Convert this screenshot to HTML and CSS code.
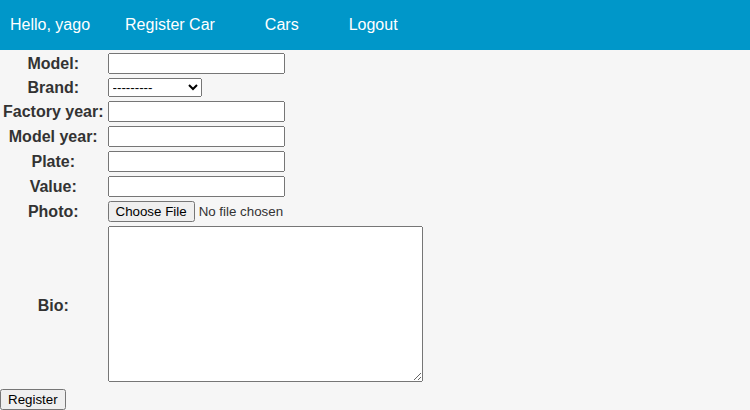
FILE: index.html
```html
<!DOCTYPE html>
<html>
<head>
<meta charset="utf-8">
<link rel="stylesheet" href="styles.css">
</head>
<body>
<nav class="topbar">
  <span class="greet">Hello, yago</span>
  <a class="nav-link" href="#">Register Car</a>
  <a class="nav-link" href="#">Cars</a>
  <a class="nav-link" href="#">Logout</a>
</nav>
<form class="car-form">
  <table class="form-table">
    <tr><th class="lbl">Model:</th><td><input class="txt" type="text"></td></tr>
    <tr><th class="lbl">Brand:</th><td><select class="sel"><option>---------</option></select></td></tr>
    <tr><th class="lbl">Factory year:</th><td><input class="txt" type="text"></td></tr>
    <tr><th class="lbl">Model year:</th><td><input class="txt" type="text"></td></tr>
    <tr><th class="lbl">Plate:</th><td><input class="txt" type="text"></td></tr>
    <tr><th class="lbl">Value:</th><td><input class="txt" type="text"></td></tr>
    <tr><th class="lbl">Photo:</th><td><input class="file" type="file"></td></tr>
    <tr><th class="lbl">Bio:</th><td><textarea class="bio"></textarea></td></tr>
  </table>
  <input class="submit" type="submit" value="Register">
</form>
</body>
</html>
```
FILE: styles.css
```css
html, body {
  margin: 0;
  padding: 0;
}
body {
  background: #f6f6f6;
  font-family: "Liberation Sans", Arial, sans-serif;
  color: #333;
}
.topbar {
  height: 50px;
  background: #0097c9;
  display: flex;
  align-items: center;
  font-size: 16px;
}
.greet {
  color: #fff;
  padding: 0 10px;
}
.nav-link {
  color: #fff;
  text-decoration: none;
  padding: 0 25px;
}
.car-form {
  margin: 0;
}
.form-table {
  border-spacing: 2px;
}
.form-table td, .form-table th {
  padding: 1px;
}
.lbl {
  font-size: 16px;
  font-weight: bold;
  color: #333;
  text-align: center;
}
.txt {
  font-family: "Liberation Sans", Arial, sans-serif;
  width: 177px;
  height: 21px;
  box-sizing: border-box;
  margin: 0;
}
.sel {
  font-family: "Liberation Sans", Arial, sans-serif;
  width: 94px;
  height: 19px;
  margin: 0;
}
.file {
  font-family: "Liberation Sans", Arial, sans-serif;
  margin: 0;
}
.bio {
  width: 315px;
  height: 156px;
  box-sizing: border-box;
  margin: 0;
}
.submit {
  font-family: "Liberation Sans", Arial, sans-serif;
  margin: 0;
}
```
